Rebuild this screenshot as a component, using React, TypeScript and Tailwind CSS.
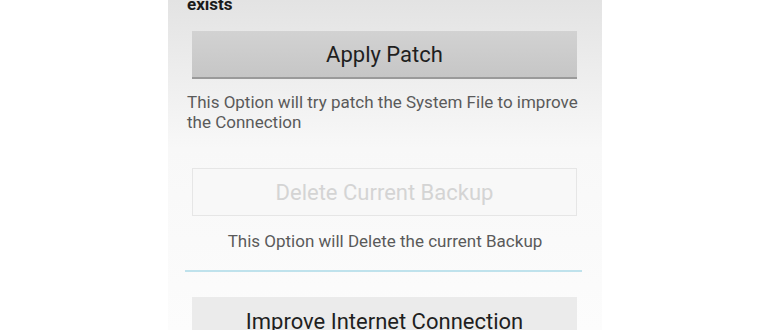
const font = { fontFamily: 'Roboto, "Noto Sans", sans-serif' };

const Hint = ({ children, center }: { children: React.ReactNode; center?: boolean }) => (
	<p
		className={`whitespace-nowrap px-[19px] text-[17px] leading-[20px] text-[#5a5a5a] ${center ? 'text-center' : ''}`}
	>
		{children}
	</p>
);

const App = () => {
	return (
		<div className="h-[330px] w-full overflow-hidden bg-white" style={font}>
			<div className="mx-auto h-[330px] w-[434px] overflow-hidden bg-gradient-to-b from-[#e3e3e3] via-[#f8f8f8] via-[45%] to-[#fcfcfc]">
				<p className="-mt-[6px] h-[20px] px-[19px] text-[17px] font-bold leading-[20px] text-[#1a1a1a]">
					exists
				</p>

				<button className="mx-[24px] mt-[17px] flex h-[48px] w-[385px] items-center justify-center border-b-[2px] border-[#9a9a9a] bg-gradient-to-b from-[#d2d2d2] to-[#c6c6c6] text-[22px] text-[#1f1f1f]">
					Apply Patch
				</button>

				<div className="mt-[13px]">
					<Hint>
						This Option will try patch the System File to improve
						<br />
						the Connection
					</Hint>
				</div>

				<button
					disabled
					className="mx-[24px] mt-[36px] flex h-[48px] w-[385px] items-center justify-center border border-[#e6e6e6] bg-[#f8f8f8] text-[22px] text-[#d4d4d4]"
				>
					Delete Current Backup
				</button>

				<div className="mt-[15px]">
					<Hint center>This Option will Delete the current Backup</Hint>
				</div>

				<div className="mx-[17px] mt-[19px] h-[2px] w-[397px] bg-[#bfe2ec]" />

				<button className="mx-[24px] mt-[25px] flex h-[48px] w-[385px] items-center justify-center bg-[#ebebeb] text-[22px] text-[#1f1f1f]">
					Improve Internet Connection
				</button>
			</div>
		</div>
	);
};

export default App;
